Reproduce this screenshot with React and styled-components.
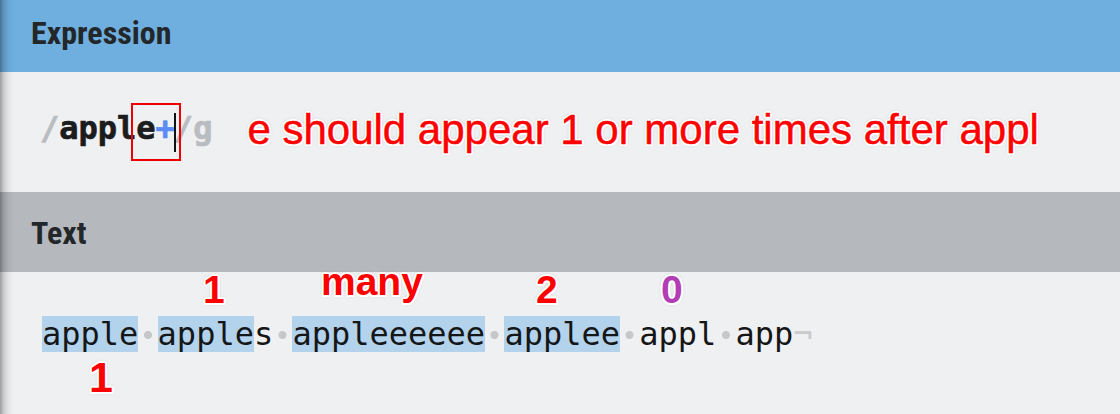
import React from "react";
import styled, { createGlobalStyle } from "styled-components";

const GlobalStyle = createGlobalStyle`
  html, body {
    margin: 0;
    padding: 0;
    background: #eff0f2;
    overflow: hidden;
  }
`;

const shade = `linear-gradient(to right, rgba(0,0,0,0.34) 0, rgba(0,0,0,0.14) 4px, rgba(0,0,0,0.04) 9px, rgba(0,0,0,0) 14px)`;

const Page = styled.div`
  width: 1120px;
  height: 414px;
  display: flex;
  flex-direction: column;
`;

const Header = styled.div`
  height: ${(p) => p.$h}px;
  flex: none;
  box-sizing: border-box;
  padding: ${(p) => p.$top}px 0 0 31px;
  background: ${shade}, ${(p) => p.$bg};
`;

const Title = styled.span`
  display: inline-block;
  font-family: "Roboto Condensed", Roboto, "Liberation Sans", sans-serif;
  font-weight: 700;
  font-size: 32px;
  line-height: 32px;
  color: #24272a;
`;

const Body = styled.div`
  position: relative;
  flex: ${(p) => (p.$grow ? "1" : "none")};
  height: ${(p) => (p.$h ? `${p.$h}px` : "auto")};
  box-sizing: border-box;
  padding: ${(p) => p.$pad};
  background: ${shade}, #eff0f2;
`;

const ExprRow = styled.div`
  display: flex;
  align-items: flex-start;
  gap: 35px;
`;

const Regex = styled.div`
  font-family: "DejaVu Sans Mono", "Liberation Mono", monospace;
  font-weight: 700;
  font-size: 32px;
  line-height: 36px;
  color: #1b1c1e;
  white-space: pre;
  -webkit-text-stroke: 0.7px currentColor;
`;

const Delim = styled.span`
  color: #b9bcc0;
`;

const Quant = styled.span`
  color: #5b8cf5;
`;

const Marked = styled.span`
  position: relative;

  &::after {
    content: "";
    position: absolute;
    left: -5px;
    right: -7px;
    top: -6px;
    bottom: -14px;
    border: 2px solid #ee0000;
  }
`;

const Caret = styled.span`
  display: inline-block;
  width: 0;
  height: 39px;
  border-left: 2px solid #111;
  margin: 0 -2px 0 -1px;
  vertical-align: -13px;
`;

const Note = styled.div`
  font-family: "Liberation Sans", Arial, sans-serif;
  font-weight: ${(p) => (p.$bold ? 700 : 400)};
  font-size: ${(p) => p.$size}px;
  line-height: 1;
  color: ${(p) => p.$color || "#ff0000"};
  white-space: nowrap;
  -webkit-text-stroke: ${(p) => (p.$bold ? "0" : "0.5px")} currentColor;
  text-shadow: 2px 0 0 #fff, -2px 0 0 #fff, 0 2px 0 #fff, 0 -2px 0 #fff,
    1.5px 1.5px 0 #fff, -1.5px 1.5px 0 #fff, 1.5px -1.5px 0 #fff,
    -1.5px -1.5px 0 #fff, 0 0 4px rgba(0, 0, 0, 0.28);
`;

const Sentence = styled(Note)`
  margin-top: -1px;
`;

const Tag = styled(Note)`
  position: absolute;
  left: ${(p) => p.$x}px;
  top: ${(p) => p.$y}px;
`;

const TextRow = styled.div`
  display: flex;
  height: 36px;
  font-family: "DejaVu Sans Mono", "Liberation Mono", monospace;
  font-size: 32px;
  line-height: 36px;
  color: #151617;
  white-space: pre;
`;

const Word = styled.span`
  background: ${(p) => (p.$hl ? "#b3d2eb" : "transparent")};
`;

const Space = styled.span`
  width: 1ch;
  background: radial-gradient(circle at 50% 19px, #c6c7c9 3.6px, rgba(198,199,201,0) 4.4px);
`;

const EndMark = styled.span`
  color: #c9cacc;
`;

const words = [
  { hl: "apple", rest: "" },
  { hl: "apple", rest: "s" },
  { hl: "appleeeeee", rest: "" },
  { hl: "applee", rest: "" },
  { hl: "", rest: "appl" },
  { hl: "", rest: "app" },
];

export default function App() {
  return (
    <Page>
      <GlobalStyle />
      <Header $h={72} $top={17} $bg="#6eafdf">
        <Title>Expression</Title>
      </Header>
      <Body $h={120} $pad="38px 0 0 40px">
        <ExprRow>
          <Regex>
            <Delim>/</Delim>
            appl
            <Marked>
              e<Quant>+</Quant>
              <Caret />
            </Marked>
            <Delim>/g</Delim>
          </Regex>
          <Sentence $size={42}>e should appear 1 or more times after appl</Sentence>
        </ExprRow>
      </Body>
      <Header $h={80} $top={25} $bg="#b5b9bd">
        <Title>Text</Title>
      </Header>
      <Body $grow $pad="44px 0 0 42px">
        <TextRow>
          {words.map((w, i) => (
            <React.Fragment key={i}>
              {i > 0 && <Space />}
              {w.hl && <Word $hl>{w.hl}</Word>}
              {w.rest && <Word>{w.rest}</Word>}
            </React.Fragment>
          ))}
          <EndMark>¬</EndMark>
        </TextRow>
        <Tag $bold $size={39} $x={203} $y={-2}>1</Tag>
        <Tag $bold $size={39} $x={321} $y={-10}>many</Tag>
        <Tag $bold $size={39} $x={536} $y={-2}>2</Tag>
        <Tag $bold $size={39} $x={661} $y={-2} $color="#b23db4">0</Tag>
        <Tag $bold $size={43} $x={89} $y={84}>1</Tag>
      </Body>
    </Page>
  );
}
